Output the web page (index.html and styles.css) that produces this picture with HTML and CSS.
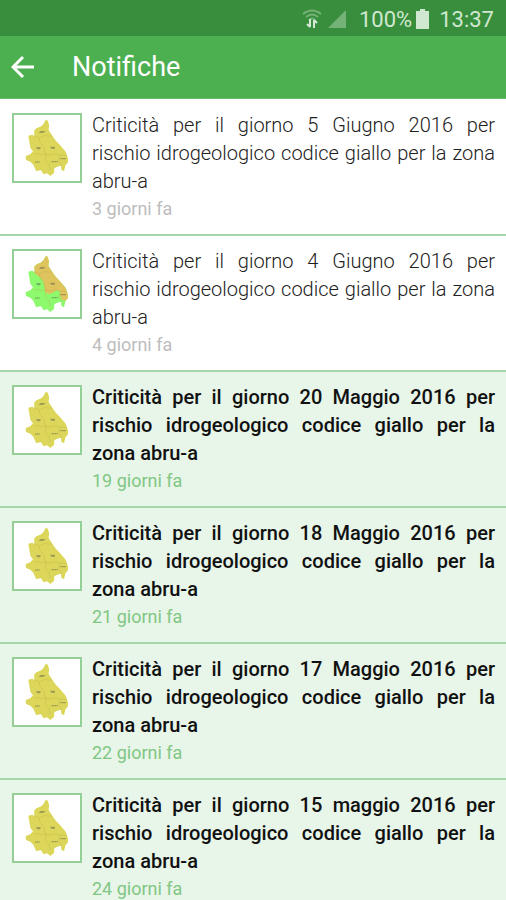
FILE: index.html
```
<!DOCTYPE html>
<html lang="it">
<head>
    <meta charset="UTF-8">
    <meta name="viewport" content="width=device-width, initial-scale=1.0">
    <title>Notifiche</title>
    <link rel="stylesheet" href="styles.css">
</head>
<body>
    <!-- Region map shared by all the notifications -->
    <svg class="sprite" width="0" height="0" aria-hidden="true">
        <symbol id="map" viewBox="26 30 198 198">
            <path class="inland" d="M125 45L131 59L129 74L141 93L151 107L166 123L181 141L187 158L188 171L181 179L176 199L168 194L167 182L156 185L147 190L146 204L135 213L125 205L115 208L107 196L92 198L84 179L75 170L62 165L61 153L75 148L83 139L75 128L72 110L69 92L80 89L88 93L87 77L94 70L106 65L115 57L121 46Z"/>
            <path class="coast" d="M125 45L131 59L129 74L141 93L151 107L166 123L181 141L187 158L188 171L181 179L170 176L164 163L165 151L153 148L143 155L130 159L119 153L118 138L113 119L102 107L88 97L87 77L94 70L106 65L115 57L121 46Z"/>
            <path class="limits" d="M88 93L104 99L116 92L136 94M101 99L105 114L116 128L119 146L113 150L100 146L84 147M119 146L135 150L148 146L165 151L184 151M123 146L119 164L132 180L134 197M165 151L160 164L168 182"/>
            <path class="labels" d="M105 80H119M93 128H106M135 127H150M89 171H103M139 170H157M165 161H182M102 82H114M95 131H104M138 130H147"/>
        </symbol>
    </svg>

    <div class="status-bar">
        <svg class="wifi" viewBox="0 0 20 20" aria-hidden="true">
            <g fill="none" stroke="#75b278" stroke-width="2">
                <path d="M1 5Q10-2 19 5"/>
                <path d="M4 8Q10 3 16 8"/>
                <path d="M7 11Q10 8 13 11"/>
            </g>
            <path d="M8 10V18M5 15L8 18M12 19V11M12 11L15 14" fill="none" stroke="#d5ead6" stroke-width="2"/>
        </svg>
        <svg class="signal" viewBox="0 0 18 18" aria-hidden="true">
            <path d="M0 18L18 0V18Z" fill="#74b277"/>
        </svg>
        <span class="battery-level">100%</span>
        <svg class="battery" viewBox="0 0 13 20" aria-hidden="true">
            <path d="M4 0H9V2H13V20H0V2H4Z" fill="#d0e8d1"/>
        </svg>
        <span class="clock">13:37</span>
    </div>

    <header class="toolbar">
        <button class="back" type="button" aria-label="Indietro">
            <svg viewBox="0 0 24 24" aria-hidden="true">
                <path d="M23 12H3M12 2L2 12L12 22" fill="none" stroke="#fff" stroke-width="3"/>
            </svg>
        </button>
        <h1>Notifiche</h1>
    </header>

    <main class="notifications">
        <article class="notification">
            <svg class="thumb" aria-hidden="true"><use href="#map"/></svg>
            <div class="content">
                <p class="message">Criticità per il giorno 5 Giugno 2016 per rischio idrogeologico codice giallo per la zona abru-a</p>
                <p class="time">3 giorni fa</p>
            </div>
        </article>

        <article class="notification">
            <svg class="thumb mixed" aria-hidden="true"><use href="#map"/></svg>
            <div class="content">
                <p class="message">Criticità per il giorno 4 Giugno 2016 per rischio idrogeologico codice giallo per la zona abru-a</p>
                <p class="time">4 giorni fa</p>
            </div>
        </article>

        <article class="notification unread">
            <svg class="thumb" aria-hidden="true"><use href="#map"/></svg>
            <div class="content">
                <p class="message">Criticità per il giorno 20 Maggio 2016 per rischio idrogeologico codice giallo per la zona abru-a</p>
                <p class="time">19 giorni fa</p>
            </div>
        </article>

        <article class="notification unread">
            <svg class="thumb" aria-hidden="true"><use href="#map"/></svg>
            <div class="content">
                <p class="message">Criticità per il giorno 18 Maggio 2016 per rischio idrogeologico codice giallo per la zona abru-a</p>
                <p class="time">21 giorni fa</p>
            </div>
        </article>

        <article class="notification unread">
            <svg class="thumb" aria-hidden="true"><use href="#map"/></svg>
            <div class="content">
                <p class="message">Criticità per il giorno 17 Maggio 2016 per rischio idrogeologico codice giallo per la zona abru-a</p>
                <p class="time">22 giorni fa</p>
            </div>
        </article>

        <article class="notification unread">
            <svg class="thumb" aria-hidden="true"><use href="#map"/></svg>
            <div class="content">
                <p class="message">Criticità per il giorno 15 maggio 2016 per rischio idrogeologico codice giallo per la zona abru-a</p>
                <p class="time">24 giorni fa</p>
            </div>
        </article>
    </main>
</body>
</html>
```
FILE: styles.css
```
* {
    box-sizing: border-box;
}

body {
    font-family: Roboto, "Noto Sans", sans-serif;
    margin: 0;
    background: #fff;
    color: #212121;
    height: 100vh;
    overflow: hidden;
}

.sprite {
    position: absolute;
}

.status-bar {
    display: flex;
    align-items: center;
    justify-content: flex-end;
    height: 36px;
    padding: 2px 12px 0 0;
    background: #388e3c;
    color: #d0e8d1;
    font-size: 22px;
}

.wifi {
    width: 20px;
    height: 20px;
    margin-right: 6px;
}

.signal {
    width: 18px;
    height: 18px;
    margin-right: 13px;
}

.battery {
    width: 13px;
    height: 20px;
    margin: 0 10px 0 4px;
}

.toolbar {
    display: flex;
    align-items: center;
    height: 63px;
    padding: 0 11px;
    background: #4caf50;
    border-bottom: 1px solid #66bb6a;
}

.toolbar h1 {
    margin: 0 0 0 37px;
    color: #fff;
    font-size: 27px;
    font-weight: 400;
}

.back {
    width: 24px;
    height: 24px;
    padding: 0;
    background: none;
    border: none;
    cursor: pointer;
}

.back svg {
    display: block;
    width: 24px;
    height: 24px;
}

.notifications {
    padding-top: 1px;
}

.notification {
    display: flex;
    align-items: flex-start;
    gap: 10px;
    padding: 11px 11px 11px 12px;
    border-bottom: 2px solid #a5d6a7;
}

.thumb {
    flex: none;
    width: 70px;
    height: 70px;
    margin-top: 2px;
    background: #fff;
    border: 2px solid #94cf97;
    --inland: #dcd75a;
    --coast: #dcd75a;
}

.thumb.mixed {
    --inland: #8df96d;
    --coast: #dfc35c;
}

.inland {
    fill: var(--inland);
}

.coast {
    fill: var(--coast);
}

.limits {
    fill: none;
    stroke: #b7a84d;
    stroke-width: 2;
    opacity: 0.5;
}

.labels {
    fill: none;
    stroke: #555;
    stroke-width: 3;
    stroke-dasharray: 4 1;
    opacity: 0.6;
}

.content {
    flex: 1;
}

.message,
.time {
    margin: 0;
    line-height: 28px;
}

.message {
    font-size: 20px;
    font-weight: 300;
    text-align: justify;
}

.time {
    color: #bdbdbd;
    font-size: 18px;
}

.unread {
    background: #e8f5e9;
}

.unread .message {
    color: #111;
    font-weight: 500;
}

.unread .time {
    color: #81c784;
}
```
